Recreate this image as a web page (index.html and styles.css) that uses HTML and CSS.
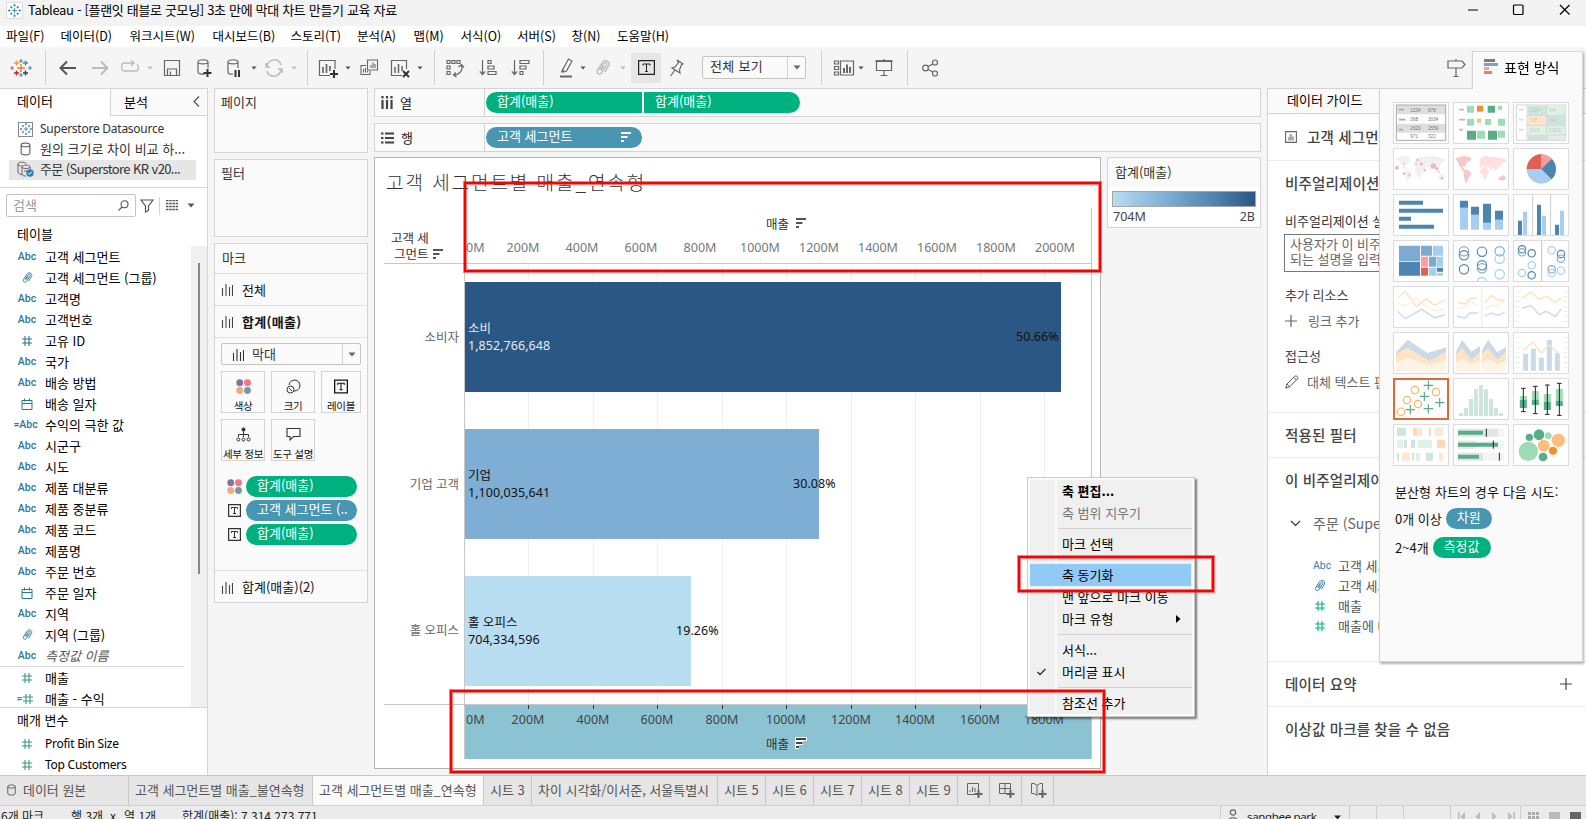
FILE: index.html
```html
<!DOCTYPE html>
<html lang="ko">
<head>
  <meta charset="UTF-8">
  <meta name="viewport" content="width=device-width, initial-scale=1.0">
  <title>Tableau</title>
  <link rel="stylesheet" href="styles.css">
</head>
<body>
  <!-- shared icons -->
  <svg class="defs">
    <symbol id="hash" viewBox="0 0 12 12"><path d="M4 1v10M8 1v10M1 4h10M1 8h10" fill="none" stroke="currentColor" stroke-width="1.1"/></symbol>
    <symbol id="clip" viewBox="0 0 12 14"><path d="M3.2 8.6 6.8 3.6C8 2.2 9.6 3.4 8.7 4.8L5 10.6C3.6 12.8.4 11.2 1.7 8.6L5.5 2.8C7.6-.2 12 2 10.3 5.4L7.4 10.2M6.6 5.5 4.4 9" fill="none" stroke="currentColor" stroke-width="1"/></symbol>
    <symbol id="cal" viewBox="0 0 12 12"><path d="M1 2.5h10v9H1zM1 5.500h10M3.500 0.500v3M8.500 0.500v3" fill="none" stroke="currentColor"/></symbol>
    <symbol id="bars" viewBox="0 0 12 13"><path d="M1.500 5v8M5 1v12M8.500 4v9M11.500 2v11" fill="none" stroke="currentColor" stroke-width="1.100"/></symbol>
    <symbol id="tbox" viewBox="0 0 13 13"><path d="M.6.600h11.800v11.800H.6z" fill="none" stroke="currentColor" stroke-width="1.200"/><path d="M3.500 5V3.500h6V5M6.500 3.500v6M5 9.500h3" fill="none" stroke="currentColor"/></symbol>
    <symbol id="dots" viewBox="0 0 14 14"><circle cx="3.500" cy="3.500" r="3.200" fill="#86709f"/><circle cx="10.700" cy="3.500" r="3.200" fill="#fb7185"/><circle cx="3.500" cy="10.700" r="3.200" fill="#f4a77c"/><circle cx="10.700" cy="10.700" r="3.200" fill="#7199a6"/></symbol>
    <symbol id="sort" viewBox="0 0 10 10"><path d="M0 1h10M0 5h6.500M0 9h3" fill="none" stroke="currentColor" stroke-width="2"/></symbol>
    <symbol id="down" viewBox="0 0 8 5"><path d="M.5.500h7L4 4.500z" fill="currentColor"/></symbol>
    <symbol id="db" viewBox="0 0 12 16"><path d="M1 3.500v9c0 3 10 3 10 0v-9c0-3-10-3-10 0zc0 2.700 10 2.700 10 0" fill="none" stroke="currentColor" stroke-width="1.200"/></symbol>
    <symbol id="flake" viewBox="0 0 16 16"><path d="M8 5v6M5 8h6M8 0v3M6.500 1.500h3M8 13v3M6.500 14.500h3M1.500 6.500v3M0 8h3M14.500 6.500v3M13 8h3M4 2.500v3M2.500 4h3M12 2.500v3M10.500 4h3M4 10.500v3M2.500 12h3M12 10.500v3M10.500 12h3" fill="none" stroke="currentColor" stroke-width="1.100"/></symbol>
    <symbol id="plus" viewBox="0 0 12 12"><path d="M6 0v12M0 6h12" fill="none" stroke="currentColor" stroke-width="1.200"/></symbol>
  </svg>

  <header class="titlebar">
    <span class="app-icon"><svg width="13" height="13"><use href="#flake"/></svg></span>
    <span class="app-title">Tableau - [플랜잇 태블로 굿모닝] 3초 만에 막대 차트 만들기 교육 자료</span>
    <svg class="win-buttons" width="104" height="12" viewBox="0 0 104 12" fill="none" stroke="#000" stroke-width="1.200"><path d="M0 6h10M92 1l9.500 9.500M101.500 1L92 10.500"/><rect x="45.500" y="1" width="9.500" height="9.500" rx="1"/></svg>
  </header>

  <nav class="menubar">
    <span>파일(F)</span><span>데이터(D)</span><span>워크시트(W)</span><span>대시보드(B)</span><span>스토리(T)</span><span>분석(A)</span><span>맵(M)</span><span>서식(O)</span><span>서버(S)</span><span>창(N)</span><span>도움말(H)</span>
  </nav>

  <div class="toolbar">
    <svg class="ico" viewBox="0 0 24 24" stroke-width="1.400"><path stroke="#ef7f2d" d="M12 8v8M8 12h8"/><path stroke="#e7a13a" d="M7.500 4.500v5M5 7h5"/><path stroke="#5a7ca8" d="M12 3v4M10 5h4M12 17v4M10 19h4M3 10v4M1.500 12h3.500M21 10v4M19 12h4" stroke-width="1"/><path stroke="#3d8fb5" d="M16.500 4.500v5M14 7h5"/><path stroke="#c72035" d="M7.500 14.500v5M5 17h5"/><path stroke="#1f447e" d="M16.500 14.500v5M14 17h5"/></svg>
    <i class="sep"></i>
    <svg class="ico back" viewBox="0 0 24 24"><path d="M20 12H5M11 5.500 4.500 12l6.500 6.500"/></svg>
    <svg class="ico pale" viewBox="0 0 24 24" stroke-width="1.800"><path d="M4 12h15M13 5.500l6.500 6.500-6.500 6.500"/></svg>
    <svg class="ico pale" viewBox="0 0 24 24" stroke-width="1.300"><path d="M16 7H6c-3 0-3 8 0 8h12c3 0 3-6 1-7M13 4l3 3-3 3"/></svg>
    <svg class="arr pale"><use href="#down"/></svg>
    <svg class="ico" viewBox="0 0 24 24" stroke-width="1.200"><path d="M4.500 4.500h15v15h-15zM7.500 19v-6h9v6M10.500 19v-3.500"/></svg>
    <svg class="ico" viewBox="0 0 24 24" stroke-width="1.200"><path d="M13 18c-3 .5-7 0-7-2V6c0-3 10-3 10 0v6M6 6c0 2.500 10 2.500 10 0"/><path d="M15.500 13v8M11.500 17h8" stroke="#333" stroke-width="2"/></svg>
    <svg class="ico" viewBox="0 0 24 24" stroke-width="1.200"><path d="M11 18c-3 .5-5 0-5-2V6c0-3 10-3 10 0v6M6 6c0 2.500 10 2.500 10 0"/><path d="M13.500 14v7M17 14v7" stroke="#333" stroke-width="2"/></svg>
    <svg class="arr"><use href="#down"/></svg>
    <svg class="ico pale" viewBox="0 0 24 24" stroke-width="1.500"><path d="M5 10c2-8 12-8 14-1M19 14c-2 8-12 8-14 1M4 7v4h4M20 17v-4h-4"/></svg>
    <svg class="arr pale"><use href="#down"/></svg>
    <i class="sep"></i>
    <svg class="ico" viewBox="0 0 24 24" stroke-width="1.200"><path d="M19 13V4.500H3.500v15H14"/><path d="M7 11v6M10.500 8v9M14 10v5" stroke-width="1.700"/><path d="M18 14v8M14 18h8" stroke="#333" stroke-width="2"/></svg>
    <svg class="arr"><use href="#down"/></svg>
    <svg class="ico" viewBox="0 0 24 24" stroke-width="1.100"><path d="M10.500 4h10v10h-10zM9 9.500H4v9h9V15M14 12V9M16 12V6.500M18 12V8M6.500 16.500V13M8.500 16.500V12M10.500 16.500V15"/></svg>
    <svg class="ico" viewBox="0 0 24 24" stroke-width="1.200"><path d="M17.500 13V4.500H2.500v15H13"/><path d="M6 11v6M9.500 8v9M13 10v5" stroke-width="1.500"/><path d="M14 15l6 6M20 15l-6 6" stroke="#333" stroke-width="2"/></svg>
    <svg class="arr"><use href="#down"/></svg>
    <i class="sep"></i>
    <svg class="ico" viewBox="0 0 24 24" stroke-width="1.200"><path d="M4 4.500h3v3H4zM9 4.500h3v3H9zM14 4.500h3v3h-3zM4 10h3v3H4zM4 15.500h3v3H4zM18 9c3 5-2 10-7 10M15.500 11l3-2.500 2.500 3M13 16.500 10.500 19l3 2"/></svg>
    <svg class="ico" viewBox="0 0 24 24" stroke-width="1.200"><path d="M6.500 4v14M4 15.500 6.500 18.500 9 15.500M12 4.500h3v3h-3zM12 10h6v3h-6zM12 15.500h8v3h-8z"/></svg>
    <svg class="ico" viewBox="0 0 24 24" stroke-width="1.200"><path d="M6.500 4v14M4 15.500 6.500 18.500 9 15.500M12 4.500h9v3h-9zM12 10h6v3h-6zM12 15.500h3v3h-3z"/></svg>
    <i class="sep"></i>
    <svg class="ico" viewBox="0 0 24 24" stroke-width="1.200"><path d="M9 13l5.500-10 3.500 2-5.500 10-3 1zM9 13l-1.500 3M9.500 16H7"/><path d="M6 20.500h12" stroke-width="2"/></svg>
    <svg class="arr"><use href="#down"/></svg>
    <svg class="ico pale" viewBox="0 0 24 24"><use href="#clip" x="4" y="3" width="16" height="18"/></svg>
    <svg class="arr pale"><use href="#down"/></svg>
    <span class="tool-on"><svg width="17" height="15" viewBox="0 0 17 15" fill="none" stroke="#222"><path d="M.600.600h15.800v13.800H.600z" stroke-width="1.200"/><path d="M5 5.500V4h7v1.500M8.500 4v7.500M7 11.500h3"/></svg></span>
    <svg class="ico" viewBox="0 0 24 24" stroke-width="1.200"><path d="M13 4l6 4-1.500.8-2 5 .5 3.200-8-5 3-1 3.500-4.500zM11 14l-4.500 6"/></svg>
    <div class="combo fit"><span>전체 보기</span><b><svg width="8" height="5"><use href="#down"/></svg></b></div>
    <i class="sep"></i>
    <svg class="ico" viewBox="0 0 24 24" stroke-width="1.200"><path d="M2.500 5h4v3h-4zM2.500 10.500h4v3h-4zM2.500 16h4v3h-4zM8.500 5h13v14h-13z"/><path d="M12 17v-5M15 17V8.500M18 17v-6" stroke-width="2"/></svg>
    <svg class="arr"><use href="#down"/></svg>
    <svg class="ico" viewBox="0 0 24 24" stroke-width="1.200"><path d="M4.500 5.500h15v9h-15zM12 15v4.500M8.500 19.500h7M12 3v2"/><path d="M3.500 5h17" stroke-width="1.800"/></svg>
    <i class="sep"></i>
    <svg class="ico" viewBox="0 0 24 24" stroke-width="1.200"><circle cx="17" cy="6.500" r="2.500"/><circle cx="7.500" cy="12" r="2.800"/><circle cx="17" cy="17.500" r="2.500"/><path d="M10 10.500 15 8M10 13.500l5 2.500"/></svg>
    <svg class="ico" viewBox="0 0 24 24" stroke-width="1.200"><path d="M4 5h14l3 3.500-3 3.500H4zM12 3v2M12 12v8M9.500 20.500h5"/></svg>
  </div>

  <main class="work">
    <aside class="data-pane">
      <div class="pane-tabs"><span class="tab-on">데이터</span><span class="tab-off">분석 <svg width="7" height="11" viewBox="0 0 7 11" fill="none" stroke="#555" stroke-width="1.300"><path d="M6 .500 1 5.500l5 5"/></svg></span></div>
      <ul class="sources">
        <li><span class="src-ico boxed"><svg width="12" height="12"><use href="#flake"/></svg></span><span class="latin">Superstore Datasource</span></li>
        <li><span class="src-ico"><svg width="11" height="14"><use href="#db"/></svg></span><span>원의 크기로 차이 비교 하...</span></li>
        <li class="selected"><span class="src-ico"><svg width="17" height="16" viewBox="0 0 17 16" fill="none" stroke="#666"><path d="M1 3v8c0 2 3 2.500 4 2.500M1 3c0-2.500 8-2.500 8 0M1 3c0 2 3 2 4 2M5 6v7c0 2 3 2 4 2M5 6c0-2.500 8-2.500 8 0v2M5 6c0 2 8 2 8 0M7 10h4"/><circle cx="13" cy="12" r="3.700" fill="#317fa8" stroke="none"/><path d="M11.200 12l1.300 1.300 2.300-2.500" stroke="#fff"/></svg></span><span class="tight">주문 (Superstore KR v20...</span></li>
      </ul>
      <div class="search-row">
        <div class="search"><span>검색</span><svg width="11" height="11" viewBox="0 0 11 11" fill="none" stroke="#555" stroke-width="1.100"><circle cx="6.500" cy="4.300" r="3.500"/><path d="M4 7 .500 10.500"/></svg></div>
        <svg width="14" height="14" viewBox="0 0 14 14" fill="none" stroke="#555" stroke-width="1.200"><path d="M1 1h12L8.500 7v4.500L5.500 13V7z"/></svg>
        <i></i>
        <svg width="12" height="11" viewBox="0 0 12 11" stroke="#555" stroke-width="1.300" stroke-dasharray="2.500 .7"><path d="M0 .500h12M0 3.500h12M0 6.500h12M0 9.500h12"/></svg>
        <svg class="drop" width="8" height="5"><use href="#down"/></svg>
      </div>
      <h2>테이블</h2>
      <div class="field-area">
        <ul class="fields">
          <li><em>Abc</em>고객 세그먼트</li>
          <li><em><svg width="11" height="14"><use href="#clip"/></svg></em>고객 세그먼트 (그룹)</li>
          <li><em>Abc</em>고객명</li>
          <li><em>Abc</em>고객번호</li>
          <li><em><svg width="12" height="12"><use href="#hash"/></svg></em>고유 ID</li>
          <li><em>Abc</em>국가</li>
          <li><em>Abc</em>배송 방법</li>
          <li><em><svg width="12" height="12"><use href="#cal"/></svg></em>배송 일자</li>
          <li><em class="calc">=Abc</em>수익의 극한 값</li>
          <li><em>Abc</em>시군구</li>
          <li><em>Abc</em>시도</li>
          <li><em>Abc</em>제품 대분류</li>
          <li><em>Abc</em>제품 중분류</li>
          <li><em>Abc</em>제품 코드</li>
          <li><em>Abc</em>제품명</li>
          <li><em>Abc</em>주문 번호</li>
          <li><em><svg width="12" height="12"><use href="#cal"/></svg></em>주문 일자</li>
          <li><em>Abc</em>지역</li>
          <li><em><svg width="11" height="14"><use href="#clip"/></svg></em>지역 (그룹)</li>
          <li class="italic"><em>Abc</em>측정값 이름</li>
          <li class="measure first"><em><svg width="12" height="12"><use href="#hash"/></svg></em>매출</li>
          <li class="measure"><em class="calc">=<svg width="12" height="12"><use href="#hash"/></svg></em>매출 - 수익</li>
        </ul>
        <div class="scroll"><i></i></div>
      </div>
      <div class="params">
        <h2>매개 변수</h2>
        <ul class="fields">
          <li class="measure"><em><svg width="12" height="12"><use href="#hash"/></svg></em><span class="latin">Profit Bin Size</span></li>
          <li class="measure"><em><svg width="12" height="12"><use href="#hash"/></svg></em><span class="latin">Top Customers</span></li>
        </ul>
      </div>
    </aside>

    <section class="cards">
      <div class="card pages">페이지</div>
      <div class="card filters">필터</div>
      <div class="card marks">
        <div class="marks-title">마크</div>
        <div class="mark-row"><svg width="12" height="13"><use href="#bars"/></svg>전체</div>
        <div class="mark-row bold"><svg width="12" height="13"><use href="#bars"/></svg>합계(매출)</div>
        <div class="mark-body">
          <div class="combo type"><svg width="12" height="13"><use href="#bars"/></svg><span>막대</span><b><svg width="8" height="5"><use href="#down"/></svg></b></div>
          <div class="mark-buttons">
            <div><svg width="15" height="15"><use href="#dots"/></svg>색상</div>
            <div><svg width="15" height="15" viewBox="0 0 15 15" fill="none" stroke="#333"><path d="M3 6a5.500 5.500 0 1 1 5 6"/><circle cx="4.500" cy="10.500" r="3.500"/><path d="M3 9l3 3"/></svg>크기</div>
            <div><svg width="14" height="15"><use href="#tbox"/></svg>레이블</div>
            <div><svg width="15" height="15" viewBox="0 0 15 15" fill="none" stroke="#333"><circle cx="7.500" cy="2.500" r="1.600" fill="#333"/><path d="M7.500 4v6M2.500 10V7.500h10V10"/><circle cx="2.300" cy="12.500" r="1.500"/><circle cx="7.500" cy="12.500" r="1.500"/><circle cx="12.700" cy="12.500" r="1.500"/></svg>세부 정보</div>
            <div><svg width="15" height="15" viewBox="0 0 15 15" fill="none" stroke="#333" stroke-width="1.100"><path d="M1 1.500h13v8H7.500L4 13V9.500H1z"/></svg>도구 설명</div>
          </div>
          <div class="enc"><svg width="15" height="15"><use href="#dots"/></svg><span class="pill green">합계(매출)</span></div>
          <div class="enc"><svg width="13" height="13"><use href="#tbox"/></svg><span class="pill blue">고객 세그먼트 (..</span></div>
          <div class="enc"><svg width="13" height="13"><use href="#tbox"/></svg><span class="pill green">합계(매출)</span></div>
        </div>
        <div class="mark-row last"><svg width="12" height="13"><use href="#bars"/></svg>합계(매출)(2)</div>
      </div>
    </section>

    <section class="sheet">
      <div class="shelf columns">
        <div class="shelf-name"><svg width="12" height="13" viewBox="0 0 12 13" stroke="#444" stroke-width="2.200"><path d="M1.500 4v9M6 4v9M10.500 4v9M1.500 0v2.500M6 0v2.500M10.500 0v2.500"/></svg>열</div>
        <span class="pill green left">합계(매출)</span><span class="pill green right">합계(매출)</span>
      </div>
      <div class="shelf">
        <div class="shelf-name"><svg width="13" height="12" viewBox="0 0 13 12" stroke="#444" stroke-width="2"><path d="M4 1.500h9M4 6h9M4 10.500h9M0 1.500h2.500M0 6h2.500M0 10.500h2.500"/></svg>행</div>
        <span class="pill blue row-pill">고객 세그먼트<svg width="10" height="10"><use href="#sort"/></svg></span>
      </div>
      <div class="canvas">
        <div class="view">
          <h1>고객 세그먼트별 매출_연속형</h1>
          <svg class="chart" width="725" height="562" viewBox="375 206 725 562">
            <path class="grid" d="M523.500 258v5M582.500 258v5M641.500 258v5M700.500 258v5M760.500 258v5M819.500 258v5M878.500 258v5M937.500 258v5M996.500 258v5M1055.500 258v5"/>
            <path class="grid" d="M528.500 264v440M593.500 264v440M657.500 264v440M722.500 264v440M786.500 264v440M851.500 264v440M915.500 264v440M980.500 264v440M1044.500 264v440"/>
            <rect x="465" y="705" width="626" height="54" fill="#8cc3d2"/>
            <path class="rule" d="M384 263.500h708M384 704.500h708M464.500 264v495M1091.500 208v551"/>
            <rect x="465" y="282" width="596" height="110" fill="#2a5783"/>
            <rect x="465" y="429" width="354" height="110" fill="#7eaed3"/>
            <rect x="465" y="576" width="226" height="110" fill="#b9ddf1"/>
            <path d="M528.500 705v4M593.500 705v4M657.500 705v4M722.500 705v4M786.500 705v4M851.500 705v4M915.500 705v4M980.500 705v4M1044.500 705v4" stroke="#333"/>

            <g class="head"><text x="766" y="228.500">매출</text><text x="391" y="243">고객 세</text><text x="394" y="258.500">그먼트</text></g>
            <g color="#555"><use href="#sort" x="796" y="218" width="10" height="10"/><use href="#sort" x="433" y="249" width="10" height="10"/></g>
            <g class="tick"><text x="466" y="252" class="start">0M</text><text x="523" y="252">200M</text><text x="582" y="252">400M</text><text x="641" y="252">600M</text><text x="700" y="252">800M</text><text x="760" y="252">1000M</text><text x="819" y="252">1200M</text><text x="878" y="252">1400M</text><text x="937" y="252">1600M</text><text x="996" y="252">1800M</text><text x="1055" y="252">2000M</text></g>
            <g class="tick dark"><text x="466" y="724" class="start">0M</text><text x="528" y="724">200M</text><text x="593" y="724">400M</text><text x="657" y="724">600M</text><text x="722" y="724">800M</text><text x="786" y="724">1000M</text><text x="851" y="724">1200M</text><text x="915" y="724">1400M</text><text x="980" y="724">1600M</text><text x="1044" y="724">1800M</text></g>
            <g class="head"><text x="766" y="748.500">매출</text></g>
            <path d="M795 737h12v4h-4v4h-4v4h-4z" fill="#fff"/>
            <g color="#444"><use href="#sort" x="796" y="738" width="10" height="10"/></g>
            <g class="member"><text x="459" y="341.500">소비자</text><text x="459" y="488.500">기업 고객</text><text x="459" y="635">홀 오피스</text></g>
            <g class="label"><text x="468" y="333" fill="#e4ebf2">소비</text><text x="468" y="350" fill="#e4ebf2">1,852,766,648</text><text x="468" y="480">기업</text><text x="468" y="497">1,100,035,641</text><text x="468" y="627">홀 오피스</text><text x="468" y="644">704,334,596</text>
            <text x="1016" y="341">50.66%</text><text x="793" y="488">30.08%</text><text x="676" y="635">19.26%</text></g>
          </svg>
        </div>
        <div class="legend">
          <div class="legend-title">합계(매출)</div>
          <div class="ramp"></div>
          <div class="ramp-ends"><span>704M</span><span>2B</span></div>
        </div>
      </div>
    </section>

    <aside class="guide">
      <div class="guide-head">데이터 가이드</div>
      <div class="guide-sheet"><svg width="12" height="12" viewBox="0 0 12 12"><path d="M.600.600h10.800v10.800H.600z" fill="none" stroke="#666" stroke-width="1.100"/><path d="M3 9.500V6h1.500V3H7v2.500h2v4z" fill="#aaa"/></svg>고객 세그먼트별 매출_연속형</div>
      <div class="guide-viz">
        <h3>비주얼리제이션</h3>
        <p class="sub">비주얼리제이션 설명</p>
        <div class="textarea">사용자가 이 비주얼리제이션에서<br>되는 설명을 입력하십시오</div>
        <p class="sub2">추가 리소스</p>
        <p class="act"><svg width="12" height="12"><use href="#plus"/></svg>링크 추가</p>
        <p class="sub3">접근성</p>
        <p class="act"><svg width="14" height="14" viewBox="0 0 14 14" fill="none" stroke="#555"><path d="M.800 13.200l1-4 8-8c1.500-1 4 1 2.700 2.700l-8 8zM2 9l3 3M9 2.500l2.500 2.500"/></svg>대체 텍스트 편집</p>
      </div>
      <div class="guide-filter">적용된 필터</div>
      <div class="guide-data">
        <h3>이 비주얼리제이션의 데이터</h3>
        <p class="ds"><svg width="11" height="7" viewBox="0 0 11 7" fill="none" stroke="#333" stroke-width="1.200"><path d="M1 1l4.500 4.500L10 1"/></svg>주문 (Superstore)</p>
        <ul><li><em>Abc</em>고객 세...</li><li><em><svg width="14" height="14"><use href="#clip"/></svg></em>고객 세...</li><li class="g"><em><svg width="12" height="12"><use href="#hash"/></svg></em>매출</li><li class="g"><em><svg width="12" height="12"><use href="#hash"/></svg></em>매출에 대한</li></ul>
      </div>
      <div class="guide-sum">데이터 요약<svg width="12" height="12"><use href="#plus"/></svg></div>
      <div class="guide-out">이상값 마크를 찾을 수 없음</div>
    </aside>
  </main>

  <div class="sheet-tabs">
    <span class="source"><svg width="9" height="12"><use href="#db"/></svg>데이터 원본</span><span>고객 세그먼트별 매출_불연속형</span><span class="on">고객 세그먼트별 매출_연속형</span><span>시트 3</span><span>차이 시각화/이서준, 서울특별시</span><span>시트 5</span><span>시트 6</span><span>시트 7</span><span>시트 8</span><span>시트 9</span>
    <span><svg width="17" height="16" viewBox="0 0 17 16" fill="none" stroke="#666"><path d="M12.500 8V1.500H1.500v11H9M4 10V8M6.500 10V5M9 10V6"/><path d="M12.500 8v8M8.500 12h8" stroke-width="2"/></svg></span>
    <span><svg width="17" height="16" viewBox="0 0 17 16" fill="none" stroke="#666"><path d="M12.500 8V1.500H1.500v10H9M7 1.500v10M1.500 6.500h11"/><path d="M12.500 8v8M8.500 12h8" stroke-width="2"/></svg></span>
    <span><svg width="17" height="16" viewBox="0 0 17 16" fill="none" stroke="#666"><path d="M12.500 8V1.500H10L7 3.500l-3-2H1.500v10H4l3 2M7 3.500v10"/><path d="M12.500 8v8M8.500 12h8" stroke-width="2"/></svg></span>
  </div>

  <footer class="status">
    <span>6개 마크</span><span>행 3개</span><span>x</span><span>열 1개</span><span>합계(매출): 7,314,273,771</span>
    <span class="user"><svg width="12" height="16" viewBox="0 0 12 16" fill="none" stroke="#666" stroke-width="1.200"><circle cx="6" cy="3.500" r="2.700"/><path d="M1 14c0-7 10-7 10 0"/></svg>sanghee.park<svg width="9" height="5"><use href="#down"/></svg></span>
    <i></i><i></i><i></i>
    <span class="pager"><svg width="58" height="9" viewBox="0 0 58 9" fill="#bbb"><path d="M0 0h1.500v9H0zM7 0v9L2.500 4.500zM22 0v9l-4.500-4.500zM34 0v9l4.500-4.500zM50 0v9l4.500-4.500zM55.500 0H57v9h-1.500z"/></svg></span>
    <span class="views"><svg width="54" height="12" viewBox="0 0 54 12"><path d="M0 1.500h11M0 5.500h11M0 9.500h11" stroke="#aaa" stroke-width="3" stroke-dasharray="3 1"/><path d="M21 0h11v7H21zM21 8h3v3h-3zM25 8h3v3h-3zM29 8h3v3h-3z" fill="#bbb"/><path d="M42 0h11v12H42z" fill="#666"/></svg></span>
  </footer>

  <!-- show me popup -->
  <div class="showme">
    <div class="showme-tab"><svg width="14" height="16" viewBox="0 0 14 16"><path d="M0 0h11v3H0z" fill="#86709f"/><path d="M0 4h14v3H0z" fill="#7d9fca"/><path d="M0 8h5v3H0z" fill="#f4a77c"/><path d="M0 12h8v3H0z" fill="#fb7185"/></svg>표현 방식</div>
    <div class="showme-body">
      <div class="tiles">
        <svg viewBox="414 70 162 120"><path d="M421 76h148v106H421z" fill="#fff"/><path d="M421 76h148v28H421zM421 132h148v27H421z" fill="#dedede"/><path d="M421 76h148v106H421z" fill="none" stroke="#aaa" stroke-width="3"/><path d="M429 90h15M429 120h19M429 150h12" stroke="#aaa" stroke-width="5"/><g class="nums" fill="#777"><text x="463" y="97">1234</text><text x="516" y="97">678</text><text x="463" y="125">368</text><text x="516" y="125">3034</text><text x="463" y="151">2620</text><text x="516" y="151">2559</text><text x="463" y="175">971</text><text x="516" y="175">322</text></g></svg>
        <svg viewBox="594 70 162 120"><path d="M609 90h15M609 120h19M609 150h12" stroke="#bbb" stroke-width="5"/><path d="M633 78h21v21h-21zM726 78h12v12h-12zM633 117h21v21h-21zM687 118h18v18h-18zM726 117h21v21h-21zM663 153h24v24h-24zM726 153h21v21h-21z" fill="#9fdcb5"/><path d="M695 78h22v21h-22zM633 153h27v27h-27zM696 153h27v27h-27z" fill="#56ad88"/><path d="M663 78h18v18h-18z" fill="#f28e2b"/><path d="M663 117h12v12h-12z" fill="#ffbe7d"/></svg>
        <svg viewBox="774 70 162 120"><path d="M815 78h57v28h-57zM872 108h56v28h-56zM815 166h57v15h-57z" fill="#cce6db"/><path d="M872 78h56v28h-56zM815 138h57v26h-57zM872 138h56v43h-56z" fill="#dff1e6"/><path d="M815 108h57v28h-57z" fill="#ffe5cc"/><path d="M781 76h148v106H781zM813 76v106M872 76v106M813 107h116M813 137h116M813 166h116" fill="none" stroke="#d5d5d5" stroke-width="3"/><path d="M788 90h15M788 120h15M788 150h15" stroke="#ddd" stroke-width="5"/><g class="nums" fill="#c3cfc9"><text x="820" y="96">1234</text><text x="878" y="96">546</text><text x="820" y="126">368</text><text x="878" y="126">340</text><text x="820" y="157">2620</text><text x="878" y="157">53890</text></g></svg>
        <svg viewBox="414 208 162 120"><path d="M416 236l26-7 18 3 6 10-12 14-10 1 9 9 8 3-16 0-12-16-5-10zM448 270l15 4 4 10-9 12-3 12-5-10-4-16zM474 250l8-14 12-4 40-3 32 8 2 8-12 6-5 10-8 4-6 10-6-12-8 10-9-14-12 10-4-4-12 4-8-6zM478 266l16-3 8 10-7 14-7 13-5-14-8-10zM546 288l14-6 9 9-4 8-18-2z" fill="#f1f1f1"/><g fill="#f6d0cf"><circle cx="445" cy="253" r="4"/><circle cx="460" cy="286" r="5"/><circle cx="480" cy="253" r="4"/><circle cx="548" cy="277" r="4"/></g><g fill="#eab8be"><circle cx="423" cy="264" r="6"/><circle cx="485" cy="241" r="4"/><circle cx="496" cy="253" r="5"/><circle cx="506" cy="271" r="4"/><circle cx="532" cy="259" r="8"/><circle cx="543" cy="267" r="5"/><circle cx="558" cy="296" r="4"/><circle cx="444" cy="282" r="4"/></g></svg>
        <svg viewBox="594 208 162 120"><path d="M597 236l26-7 18 3 6 8-14 8-6 12-9 1 9 9 8 4-16-3-10-16-5-10zM621 272l15-1 10 9-6 11-6 13-4 8-5-16zM729 293l14-7 7 9-5 8-18-3z" fill="#f7c8c6"/><path d="M671 250l2-14 12-7 36 4 28 6 2 7-14 4-3 12-9 2-6 12-7-13-7 9-9-14-10 8-4-5-10 4zM674 268l17-4 8 11-6 13-8 12-5-14-8-10z" fill="#ffe0e0"/></svg>
        <svg viewBox="774 208 162 120"><circle cx="856" cy="268" r="44" fill="#a5cef0"/><path d="M856 268h-44a44 44 0 0 1 44-44z" fill="#e15f55"/><path d="M856 268v-44a44 44 0 0 1 31 13z" fill="#ff9d9a"/><path d="M856 268l31-31a44 44 0 0 1 0 62z" fill="#4e84b0"/></svg>
        <svg viewBox="414 346 162 120"><path d="M429 369h72M429 393h132M429 417h36M429 441h105" stroke="#4e84b0" stroke-width="12"/></svg>
        <svg viewBox="594 346 162 120"><path d="M624 384v66M657 405v45M693 429v21M729 420v30" stroke="#a5cef0" stroke-width="24"/><path d="M624 363v21M657 381v24M693 372v57M729 393v27" stroke="#4e84b0" stroke-width="24"/></svg>
        <svg viewBox="774 346 162 120"><path d="M830 346v120M884 346v120" stroke="#ccc" stroke-width="3"/><path d="M792 423v43M849 375v91M903 435v31" stroke="#4e84b0" stroke-width="12"/><path d="M807 396v70M864 408v58M918 393v73" stroke="#a5cef0" stroke-width="12"/></svg>
        <svg viewBox="414 484 162 120"><path d="M429 498h63v46h-63zM495 498h33v30h-33zM519 531h22v30h-22z" fill="#7caad0"/><path d="M429 546h63v42h-63zM543 564h18v12h-18z" fill="#4e84b0"/><path d="M531 498h30v30h-30zM543 531h18v30h-18zM519 564h22v24h-22zM543 579h18v9h-18z" fill="#a5cef0"/><path d="M495 531h21v30h-21z" fill="#ff9d9a"/><path d="M495 564h21v24h-21z" fill="#e15f55"/></svg>
        <svg viewBox="594 484 162 120" fill="none" stroke-width="3.500"><g stroke="#4e84b0"><circle cx="624" cy="527" r="14"/><circle cx="624" cy="569" r="14"/><circle cx="678" cy="516" r="14"/><circle cx="678" cy="557" r="14"/></g><g stroke="#7caad0"><circle cx="624" cy="515" r="14"/><circle cx="678" cy="566" r="14"/><circle cx="731" cy="515" r="14"/></g><g stroke="#a5cef0"><circle cx="731" cy="537" r="14"/><circle cx="731" cy="584" r="14"/><circle cx="678" cy="608" r="14"/></g></svg>
        <svg viewBox="774 484 162 120" fill="none" stroke-width="3.500"><path d="M857 484v120" stroke="#ccc"/><g stroke="#4e84b0"><circle cx="798" cy="509" r="11"/><circle cx="827" cy="521" r="11"/><circle cx="827" cy="587" r="11"/><circle cx="915" cy="523" r="11"/></g><g stroke="#7caad0"><circle cx="798" cy="518" r="11"/><circle cx="887" cy="569" r="11"/><circle cx="915" cy="537" r="11"/></g><g stroke="#a5cef0"><circle cx="827" cy="557" r="11"/><circle cx="798" cy="580" r="11"/><circle cx="887" cy="512" r="11"/><circle cx="915" cy="573" r="11"/><circle cx="887" cy="580" r="11"/></g></svg>
        <svg viewBox="414 622 162 120" fill="none" stroke-width="4"><path d="M427 653l21-18 33 46 30-24 24 20 31-16" stroke="#ffdfbd"/><path d="M427 669l21 12 33-28 24 24 29 16 32-5" stroke="#ffeed3"/><path d="M424 695l24 22 49-28 38 25 31-8" stroke="#cbdae8"/></svg>
        <svg viewBox="594 622 162 120" fill="none" stroke-width="4"><path d="M677 622v120" stroke="#eee"/><path d="M603 669l24 4 18-18h20M687 669l19-22 21 14h20" stroke="#ffdfbd"/><path d="M603 687l22-4 20-18 20 14M687 690l20-14 17 4 23-18" stroke="#ffeed3"/><path d="M603 709l24 7 14-16h24M687 709l19-9 20 7 21-10" stroke="#cbdae8"/></svg>
        <svg viewBox="774 622 162 120" fill="none" stroke-width="4"><path d="M785 634v100M929 634v100" stroke="#e5e5e5" stroke-width="10" stroke-dasharray="2 13"/><path d="M798 657l26-20 26 22 20-9 28 18 18-14" stroke="#ffdfbd"/><path d="M798 686l26-9 26 28 20-10 28 15 18-22" stroke="#cbdae8"/></svg>
        <svg viewBox="414 760 162 120"><path d="M420 873V818l35-38 60 40 55-17v70z" fill="#cbdae8"/><path d="M420 873V822l35-18 65 40 50-28v57z" fill="#ffe3c6"/><path d="M420 873V848l35-13 65 20 50-14v32z" fill="#fff3e3"/></svg>
        <svg viewBox="594 760 162 120"><path d="M600 873V818l18-38 28 36 26-17v74zM678 873V813l18-33 28 38 26-17v72z" fill="#cbdae8"/><path d="M600 873V824l18-20 28 36 26-24v57zM678 873V824l18-20 28 36 26-24v57z" fill="#ffe3c6"/><path d="M600 873V850l18-14 28 18 26-12v31zM678 873V850l18-14 28 18 26-12v31z" fill="#fff3e3"/></svg>
        <svg viewBox="774 760 162 120" fill="none"><path d="M785 772v100M929 772v100" stroke="#e5e5e5" stroke-width="10" stroke-dasharray="2 13"/><path d="M809 822v51M832 807v66M856 834v39M880 780v93M904 820v53" stroke="#cbdae8" stroke-width="15"/><path d="M803 812l27-25 26 33 24-24 30 27" stroke="#ffdfbd" stroke-width="4"/></svg>
        <svg class="picked" viewBox="414 27 162 120" fill="none" stroke-width="3.500"><g stroke="#fbb462"><circle cx="435" cy="125" r="11"/><circle cx="453" cy="90" r="11"/><circle cx="477" cy="60" r="11"/><circle cx="486" cy="102" r="11"/><circle cx="540" cy="66" r="11"/></g><path d="M517 32v28M503 46h28M505 65v28M491 79h28M551 84v28M537 98h28M463 105v28M449 119h28M517 102v28M503 116h28" stroke="#56ad88"/></svg>
        <svg viewBox="594 27 162 120"><path d="M615 129v9M630 114v24M645 87v51M660 57v81M675 45v93M690 57v81M705 87v51M720 114v24M735 129v9" stroke="#cce6db" stroke-width="12"/></svg>
        <svg viewBox="774 27 162 120"><path d="M802 78v12M838 63v27M874 72v24M910 57v36" stroke="#9fdcb5" stroke-width="21"/><path d="M802 90v24M838 90v15M874 96v24M910 93v15" stroke="#56ad88" stroke-width="21"/><path d="M802 55v70M795 55h14M795 125h14M838 49v82M831 49h14M831 131h14M874 45v88M867 45h14M867 133h14M910 40v96M903 40h14M903 136h14" stroke="#222" stroke-width="3" fill="none"/></svg>
        <svg viewBox="414 166 162 120"><path d="M423 174h27v24h-27zM444 210h9v24h-9zM465 210h12v24h-12zM423 249h6v24h-6zM468 249h6v24h-6zM510 249h21v24h-21z" fill="#cce6db"/><path d="M471 174h12v24h-12zM519 174h6v24h-6zM543 210h24v24h-24zM453 249h9v24h-9z" fill="#fbd8b9"/><path d="M486 174h12v24h-12zM537 174h24v24h-24zM438 249h24v24h-24zM549 249h12v24h-12z" fill="#ffe8d0"/><path d="M423 210h18v24h-18zM486 210h42v24h-42zM480 249h12v24h-12z" fill="#def2e6"/></svg>
        <svg viewBox="594 166 162 120"><path d="M606 189h138M606 225h138M606 261h138" stroke="#f4f4f4" stroke-width="24"/><path d="M606 189h120M606 225h54M606 261h75" stroke="#e4e4e4" stroke-width="24"/><path d="M606 189h75M606 225h120M606 261h63" stroke="#56ad88" stroke-width="12"/><path d="M691 177v24M712 213v24M730 249v24" stroke="#222" stroke-width="3"/></svg>
        <svg viewBox="774 166 162 120"><g fill="#9fdcb5"><circle cx="817" cy="245" r="29"/><circle cx="877" cy="198" r="10"/></g><g fill="#56ad88"><circle cx="820" cy="203" r="11"/><circle cx="849" cy="195" r="16"/><circle cx="861" cy="262" r="13"/></g><g fill="#ffbe7d"><circle cx="863" cy="228" r="18"/><circle cx="907" cy="212" r="20"/></g><circle cx="891" cy="243" r="12" fill="#f28e2b"/></svg>
      </div>
      <p class="hint">분산형 차트의 경우 다음 시도:</p>
      <p class="need">0개 이상<span class="pill blue">차원</span></p>
      <p class="need second">2~4개<span class="pill green">측정값</span></p>
    </div>
  </div>

  <!-- axis context menu -->
  <ul class="context">
    <li class="strong">축 편집...</li>
    <li class="disabled">축 범위 지우기</li>
    <li class="line"></li>
    <li>마크 선택</li>
    <li class="line"></li>
    <li class="hover">축 동기화</li>
    <li>맨 앞으로 마크 이동</li>
    <li>마크 유형<svg class="sub-arrow" width="5" height="8" viewBox="0 0 5 8"><path d="M0 0v8l4.500-4z"/></svg></li>
    <li class="line"></li>
    <li>서식...</li>
    <li><svg class="check" width="9" height="8" viewBox="0 0 9 8" fill="none" stroke="#333" stroke-width="1.400"><path d="M.500 4l2.500 2.500L8.500 1"/></svg>머리글 표시</li>
    <li class="line"></li>
    <li>참조선 추가</li>
  </ul>

  <div class="mark-box top-axis"></div>
  <div class="mark-box bottom-axis"></div>
  <div class="mark-box sync"></div>
</body>
</html>
```
FILE: styles.css
```css
* {
  box-sizing: border-box;
}

body {
  margin: 0;
  width: 1586px;
  height: 819px;
  overflow: hidden;
  position: relative;
  background: #f5f5f5;
  font-family: "Noto Sans CJK KR", "Noto Sans", sans-serif;
  font-size: 13px;
  line-height: 20px;
  color: #222;
}

h1, h2, h3, p, ul {
  margin: 0;
  padding: 0;
  font-weight: 400;
  list-style: none;
}

em, i {
  font-style: normal;
}

svg {
  display: block;
  flex: none;
}

.defs {
  display: none;
}

.latin {
  font-family: "Noto Sans", sans-serif;
  font-size: 12px;
  letter-spacing: -0.25px;
}

.tight {
  letter-spacing: -0.6px;
}

/* window chrome */
.titlebar {
  display: flex;
  align-items: center;
  height: 26px;
  padding: 0 14px 6px 7px;
  background: #f3f3f3;
  color: #000;
}

.app-icon {
  display: flex;
  align-items: center;
  justify-content: center;
  width: 15px;
  height: 15px;
  background: #fff;
  color: #317fa8;
  outline: 1px solid #ddd;
}

.app-title {
  flex: 1;
  padding-left: 6px;
  letter-spacing: -0.33px;
}

.menubar {
  display: grid;
  grid-template-columns: 54.5px 69px 83px 78px 66.5px 56.5px 47px 56.5px 54.5px 45.5px 60px;
  height: 21px;
  padding-left: 6px;
  background: #fff;
  color: #000;
  font-size: 12.5px;
}

.toolbar {
  display: grid;
  grid-template-columns: 36px 11px 32px 30px 29px 13px 32px 30px 29px 11px 29px 16px 9px 29px 12px 32px 28px 17px 9px 33px 32px 35px 11px 26px 11px 29px 11px 33px 38px 119px 11px 26px 14px 35px 11px 526px 24px;
  align-items: center;
  height: 41px;
  padding-left: 9px;
  color: #666;
}

.ico {
  width: 24px;
  height: 24px;
  fill: none;
  stroke: #666;
  overflow: visible;
}

.ico.back {
  stroke: #555;
  stroke-width: 2;
}

.ico.pale {
  stroke: #bbb;
  color: #bbb;
}

.arr {
  width: 6px;
  height: 4px;
  color: #555;
}

.arr.pale {
  color: #bbb;
}

.sep {
  width: 1px;
  height: 35px;
  background: #d0d0d0;
}

.tool-on {
  display: flex;
  align-items: center;
  justify-content: center;
  width: 30px;
  height: 30px;
  background: #e6e6e6;
}

.combo {
  display: flex;
  align-items: center;
  background: #fafafa;
  border: 1px solid #c4c4c4;
  border-radius: 2px;
  color: #333;
}

.combo span {
  flex: 1;
  padding-bottom: 1px;
}

.combo b {
  display: flex;
  align-items: center;
  justify-content: center;
  width: 18px;
  height: 100%;
  border-left: 1px solid #d4d4d4;
  color: #666;
}

.combo.fit {
  width: 104px;
  height: 23px;
  padding-left: 7px;
}

.combo.fit span {
  padding-bottom: 3px;
  letter-spacing: 0.3px;
}

/* main area */
.work {
  display: flex;
  height: 687px;
}

.data-pane {
  width: 208px;
  background: #fff;
  border-top: 1px solid #d4d4d4;
  border-right: 1px solid #d4d4d4;
  overflow: hidden;
}

.pane-tabs {
  display: flex;
  height: 27px;
  line-height: 23px;
  color: #000;
}

.tab-on {
  width: 110px;
  padding-left: 17px;
}

.tab-off {
  display: flex;
  align-items: center;
  justify-content: space-between;
  flex: 1;
  padding: 0 7px 2px 13px;
  border-left: 1px solid #d4d4d4;
  border-bottom: 1px solid #d4d4d4;
  background: #fafafa;
}

.sources {
  height: 72px;
  padding: 4px 11px 0 9px;
  border-bottom: 1px solid #d4d4d4;
  color: #333;
}

.sources li {
  display: flex;
  align-items: center;
  height: 20px;
  padding-bottom: 2px;
  white-space: nowrap;
}

.sources .selected {
  background: #e6e6e6;
}

.src-ico {
  display: flex;
  justify-content: center;
  align-items: center;
  width: 15px;
  height: 15px;
  margin: 0 7px 0 9px;
  color: #555;
}

.src-ico.boxed {
  border: 1px solid #888;
  color: #317fa8;
}

.search-row {
  display: flex;
  align-items: center;
  height: 34px;
  padding: 6px 0 5px 6px;
  color: #555;
}

.search {
  display: flex;
  align-items: center;
  justify-content: space-between;
  width: 130px;
  height: 23px;
  margin-right: 4px;
  padding: 0 6px;
  border: 1px solid #c4c4c4;
  border-radius: 2px;
  color: #999;
}

.search span {
  padding-bottom: 2px;
}

.search-row i {
  width: 1px;
  height: 18px;
  margin: 0 6px 0 5px;
  background: #d4d4d4;
}

.search-row .drop {
  margin-left: 9px;
}

.data-pane h2 {
  height: 24px;
  padding: 1px 0 0 17px;
  font-size: 13px;
  line-height: 21px;
  color: #000;
}

.data-pane .params h2 {
  height: 25px;
}

.field-area {
  display: flex;
  height: 462px;
  border-bottom: 1px solid #d4d4d4;
  overflow: hidden;
}

.fields {
  flex: 1;
}

.fields li {
  display: flex;
  align-items: center;
  height: 21px;
  white-space: nowrap;
  color: #000;
}

.fields em {
  display: flex;
  align-items: center;
  justify-content: center;
  width: 18px;
  margin: 0 9px 0 18px;
  font: 500 10.5px/20px Roboto, sans-serif;
  color: #2d7598;
}

.fields em.calc {
  width: 21px;
  margin-left: 15px;
}

.fields .italic {
  color: #555;
  font-style: italic;
}

.fields .measure em {
  color: #3a9b76;
}

.fields .first {
  height: 22px;
  margin-right: 7px;
  border-top: 1px solid #d9d9d9;
}

.scroll {
  width: 16px;
  padding: 17px 0 0 7px;
  background: #f0f0f0;
}

.scroll i {
  display: block;
  width: 2px;
  height: 311px;
  background: #888;
}

/* cards */
.cards {
  width: 153.5px;
  margin-left: 6px;
}

.card {
  border: 1px solid #d4d4d4;
  background: #fafafa;
  color: #333;
}

.pages {
  height: 65px;
  padding: 3px 6px;
}

.filters {
  height: 78px;
  margin: 6px 0;
  padding: 3px 6px;
}

.marks {
  height: 360px;
}

.marks-title {
  height: 30px;
  padding: 4px 7px;
  border-bottom: 1px solid #e0e0e0;
}

.mark-row {
  display: flex;
  align-items: center;
  height: 32px;
  padding-left: 6px;
  border-bottom: 1px solid #e0e0e0;
  gap: 9px;
  color: #111;
}

.mark-row svg {
  color: #444;
}

.mark-row.bold {
  font-weight: 700;
  letter-spacing: 0.3px;
}

.mark-row.last {
  border: 0;
}

.mark-body {
  height: 233px;
  padding: 5px 6px;
  border-bottom: 1px solid #e0e0e0;
}

.combo.type {
  width: 140px;
  height: 22px;
  padding-left: 10px;
  gap: 8px;
}

.mark-buttons {
  display: grid;
  grid-template-columns: 44px 44px 40px;
  grid-auto-rows: 42px;
  gap: 6px;
  margin-top: 6px;
}

.mark-buttons div {
  display: flex;
  flex-direction: column;
  align-items: center;
  border: 1px solid #d4d4d4;
  padding-top: 7px;
  gap: 4px;
  font-size: 10.5px;
  line-height: 15px;
  white-space: nowrap;
  letter-spacing: -0.3px;
  color: #111;
}

.enc {
  display: flex;
  align-items: center;
  height: 21px;
  margin-bottom: 3px;
  color: #333;
}

.mark-buttons + .enc {
  margin-top: 15px;
}

.enc svg {
  width: 27px;
  margin-right: -2px;
}

.pill {
  display: block;
  height: 21px;
  padding: 0 11px;
  border-radius: 11px;
  line-height: 17px;
  color: #fff;
  white-space: nowrap;
}

.green {
  background: #00b180;
}

.blue {
  background: #4996b2;
}

.enc .pill {
  width: 111px;
}

/* shelves and view */
.sheet {
  width: 887px;
  margin-left: 6.5px;
}

.shelf {
  display: flex;
  align-items: center;
  height: 29px;
  margin-bottom: 5px;
  border: 1px solid #d4d4d4;
  background: #fafafa;
}

.shelf.columns {
  margin-bottom: 6px;
}

.shelf-name {
  display: flex;
  align-items: center;
  width: 110px;
  height: 100%;
  padding-left: 6px;
  gap: 7px;
  margin-right: 1px;
  border-right: 1px solid #d4d4d4;
}

.shelf .left {
  width: 156px;
  margin-right: 2px;
  border-radius: 11px 0 0 11px;
}

.shelf .right {
  width: 156px;
  border-radius: 0 11px 11px 0;
}

.row-pill {
  display: flex;
  justify-content: space-between;
  width: 156px;
}

.row-pill svg {
  margin-top: 5px;
}

.canvas {
  display: flex;
  align-items: flex-start;
}

.view {
  width: 727px;
  height: 612px;
  margin-right: 6px;
  border: 1px solid #b4b4b4;
  background: #fff;
}

.view h1 {
  height: 48px;
  padding: 9px 0 0 11px;
  font-size: 19px;
  line-height: 30px;
  font-weight: 300;
  letter-spacing: 1.95px;
  color: #333;
}

.chart {
  font-family: "Noto Sans", "Noto Sans CJK KR", sans-serif;
  font-size: 12.5px;
}

.grid {
  stroke: #f0f0f0;
}

.rule {
  stroke: #c8c8c8;
  fill: none;
}

.head {
  fill: #333;
}

.tick {
  fill: #777;
  text-anchor: middle;
}

.tick.dark {
  fill: #444;
}

.tick .start {
  text-anchor: start;
}

.member {
  fill: #666;
  text-anchor: end;
}

.label {
  fill: #111;
  letter-spacing: 0.05px;
}

.legend {
  width: 154px;
  height: 71px;
  border: 1px solid #d4d4d4;
  background: #fff;
}

.legend-title {
  height: 29px;
  padding: 4px 7px;
  background: #fafafa;
  color: #333;
}

.ramp {
  height: 16px;
  margin: 4px 4px 0;
  border: 1px solid #aaa59b;
  background: linear-gradient(90deg, #b9ddf1, #9fcae6 15%, #7eaed3 38%, #4f7fae 73%, #2a5783);
}

.ramp-ends {
  display: flex;
  justify-content: space-between;
  padding: 0 5px;
  font: 12.5px/19px "Noto Sans", sans-serif;
  color: #444;
}

/* data guide */
.guide {
  flex: 1;
  margin-left: 6px;
  border-top: 1px solid #d4d4d4;
  border-left: 1px solid #d4d4d4;
  background: #fff;
  white-space: nowrap;
  overflow: hidden;
  color: #444;
}

.guide > div {
  border-bottom: 1px solid #ececec;
  padding-left: 17px;
}

.guide h3,
.guide-sheet,
.guide-filter,
.guide-sum,
.guide-out {
  font-size: 14.5px;
  font-weight: 500;
  letter-spacing: 0.15px;
}

.guide .guide-head {
  height: 25px;
  padding-left: 19px;
  line-height: 22px;
  background: #fafafa;
  border-color: #d4d4d4;
  color: #000;
}

.guide-sheet {
  display: flex;
  align-items: center;
  gap: 10px;
  height: 47px;
}

.guide-viz {
  height: 252px;
  padding-top: 12px;
}

.guide .sub {
  margin-top: 18px;
  color: #333;
}

.textarea {
  height: 38px;
  margin: 3px 17px 0 -1px;
  padding: 2px 5px;
  border: 1px solid #777;
  line-height: 14.5px;
  color: #666;
  overflow: hidden;
}

.sub2 {
  margin-top: 13px;
}

.sub3 {
  margin-top: 15px;
}

.act {
  display: flex;
  align-items: center;
  margin-top: 6px;
  gap: 11px;
  color: #666;
}

.sub3 + .act {
  margin-top: 6px;
  gap: 8px;
}

.guide-filter {
  height: 45px;
  line-height: 44px;
}

.guide-data {
  height: 204px;
  padding-top: 12px;
}

.ds {
  display: flex;
  align-items: center;
  gap: 12px;
  margin: 23px 0 23px 5px;
  font-size: 14px;
  color: #666;
}

.guide-data li {
  display: flex;
  align-items: center;
  height: 20px;
  padding-left: 28px;
  color: #555;
}

.guide-data em {
  display: flex;
  width: 25px;
  justify-content: flex-start;
  font: 10.5px/20px Roboto, sans-serif;
  color: #317fa8;
}

.guide-data .g em {
  padding-left: 1px;
  color: #00b180;
}

.guide-sum {
  display: flex;
  align-items: center;
  justify-content: space-between;
  height: 45px;
  padding-right: 14px;
}

.guide > .guide-out {
  line-height: 44px;
  border: 0;
}

/* sheet tabs */
.sheet-tabs {
  display: grid;
  grid-template-columns: 129px 184px 171px 48px 186px 48px 48px 48px 48px 48px 32px 32px 32px 1fr;
  height: 31px;
  border-top: 1px solid #c8c8c8;
  border-bottom: 1px solid #d0d0d0;
  background: #e6e6e6;
  line-height: 20px;
  color: #555;
  white-space: nowrap;
  letter-spacing: -0.03px;
}

.sheet-tabs span {
  display: flex;
  align-items: center;
  padding: 0 0 2px 6px;
  border-right: 1px solid #c8c8c8;
}

.sheet-tabs .source {
  padding-left: 7px;
  gap: 7px;
}

.sheet-tabs .on {
  background: #fafafa;
}

.sheet-tabs span:nth-child(n+11) {
  padding-left: 8px;
}

.status {
  display: grid;
  grid-template-columns: 70px 39px 14px 58px 1038px 129px 27px 27px 47px 70px 66px;
  height: 22px;
  padding-left: 1px;
  background: #ebebeb;
  font-size: 12px;
  color: #222;
  white-space: nowrap;
}

.status i,
.status .user,
.status .pager,
.status .views {
  border-left: 1px solid #ccc;
}

.status .user {
  display: flex;
  align-items: center;
  padding-left: 6px;
  gap: 8px;
  font-family: "Noto Sans", sans-serif;
  font-size: 11.5px;
  letter-spacing: -0.35px;
}

.status .user svg:last-child {
  margin-left: 8px;
}

.status .pager,
.status .views {
  padding: 6px 0 0 7px;
}

/* show me */
.showme {
  position: absolute;
  left: 1379px;
  top: 51px;
  width: 204px;
  filter: drop-shadow(1px 2px 1px rgba(0, 0, 0, 0.3));
}

.showme-tab {
  position: relative;
  z-index: 1;
  display: flex;
  align-items: center;
  height: 38px;
  margin-left: 93px;
  margin-bottom: -1px;
  padding: 0 0 8px 11px;
  gap: 6px;
  border: 1px solid #d4d4d4;
  border-bottom: 0;
  background: #fafafa;
  font-size: 14px;
  color: #000;
}

.showme-body {
  height: 574px;
  padding: 13px 13px 0;
  border: 1px solid #d4d4d4;
  background: #fafafa;
}

.tiles {
  display: grid;
  grid-template-columns: repeat(3, 56px);
  grid-auto-rows: 42px;
  gap: 4px;
}

.tiles svg {
  width: 56px;
  height: 42px;
  background: #fff;
  border: 1px solid #dcdcdc;
}

.tiles .nums {
  font: 14px "Liberation Sans", sans-serif;
}

.tiles .picked {
  outline: 1px solid #de6a38;
  outline-offset: -2px;
  border-color: #de6a38;
}

.hint {
  margin: 16px 0 6px 2px;
  color: #111;
  white-space: nowrap;
  letter-spacing: 0.1px;
}

.need {
  display: flex;
  align-items: center;
  height: 21px;
  margin-left: 2px;
  gap: 4px;
  color: #111;
}

.need.second {
  margin-top: 8px;
}

/* context menu */
.context {
  position: absolute;
  left: 1027px;
  top: 477px;
  width: 168px;
  height: 240px;
  padding: 2px;
  border: 1px solid #ccc;
  background: linear-gradient(90deg, #f0f0f0 27px, #fafafa 27px, #fafafa 29px, #f0f0f0 29px);
  box-shadow: inset 0 0 0 2px #fafafa, 2px 2px 2px rgba(0, 0, 0, 0.5);
  color: #000;
}

.context li {
  position: relative;
  height: 22px;
  padding-left: 32px;
  line-height: 22px;
}

.context .line {
  height: 9px;
}

.context .line::before {
  content: "";
  display: block;
  border-top: 1px solid #d0d0d0;
  margin-left: -4px;
  position: relative;
  top: 4px;
}

.context .strong {
  font-weight: 700;
}

.context .disabled {
  color: #777;
}

.context .hover {
  margin-right: 1px;
  background: #91c9f7;
}

.check {
  position: absolute;
  left: 7px;
  top: 7px;
}

.sub-arrow {
  position: absolute;
  right: 11px;
  top: 7px;
}

/* red highlight frames */
.mark-box {
  position: absolute;
  border: 2px solid #f00;
  box-shadow: 0 0 0 1px rgba(255, 0, 0, 0.5), inset 0 0 0 1px rgba(255, 0, 0, 0.5);
}

.top-axis {
  left: 464px;
  top: 182px;
  width: 637px;
  height: 90px;
}

.bottom-axis {
  left: 450px;
  top: 690px;
  width: 655px;
  height: 83px;
}

.sync {
  left: 1018px;
  top: 556px;
  width: 196px;
  height: 36px;
}
```
